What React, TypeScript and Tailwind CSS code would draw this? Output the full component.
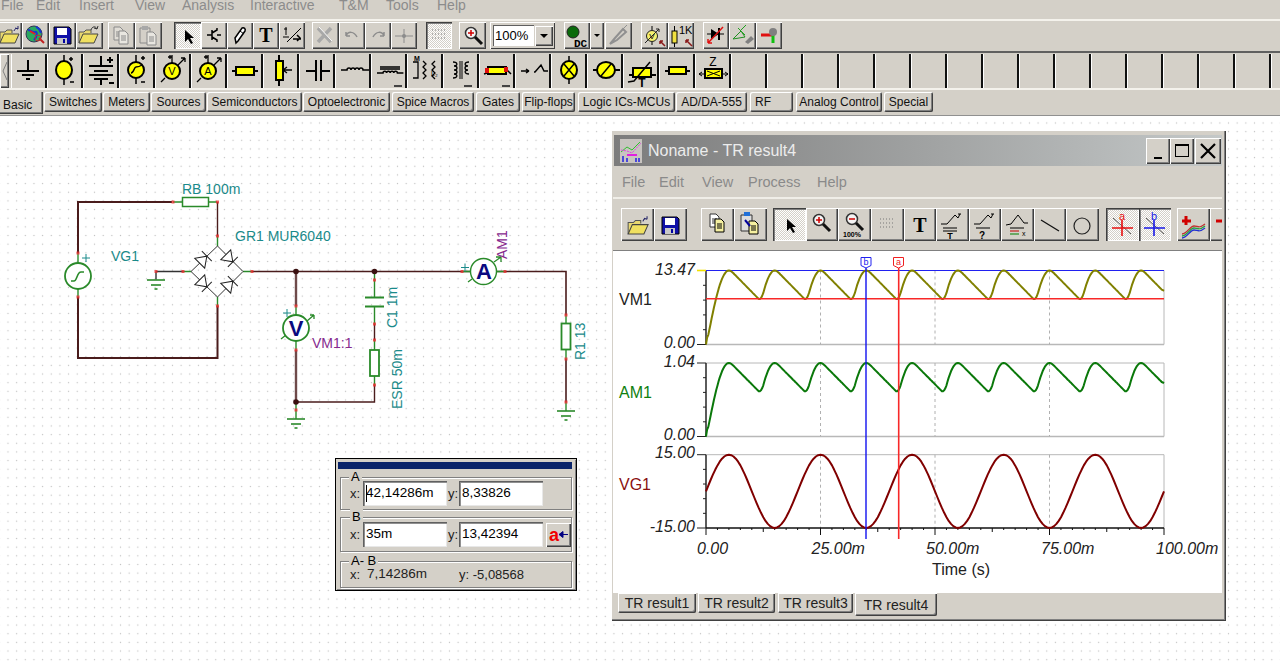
import React from "react";

const raised = "shadow-[inset_1px_1px_0_#ffffff,inset_-1px_-1px_0_#404040,inset_-2px_-2px_0_#808080]";
const pressed = "shadow-[inset_1px_1px_0_#404040,inset_2px_2px_0_#808080,inset_-1px_-1px_0_#ffffff]";
const checker = "bg-[repeating-conic-gradient(#ffffff_0_25%,#d4d0c8_0_50%)] bg-[length:2px_2px]";

const Ic = ({ w = 26, h = 27, children }: { w?: number; h?: number; children: React.ReactNode }) => (
  <svg width={w} height={h} viewBox={`0 0 ${w} ${h}`} fill="none" className="block">{children}</svg>
);

const Folder = ({ up }: { up?: boolean }) => (
  <>
    <path d="M3 21V10h5l2-2h5v3" stroke="#555" fill="#e8d870" />
    <path d="M3 21l4-9h15l-4 9z" fill="#f0e060" stroke="#444" />
    {up ? <path d="M15 8c1-4 5-4 6-1M21 7l1-3M21 7l-3-1" stroke="#333" /> : <path d="M17 9c1-3 3-3 4-2M21 7l-3-1M21 7l0-3" stroke="#226" />}
  </>
);
const Floppy = () => (
  <>
    <path d="M5 5h15l2 2v15H5z" fill="#1010a8" stroke="#000" />
    <rect x="8" y="6" width="10" height="7" fill="#fff" />
    <rect x="8" y="16" width="10" height="6" fill="#c8c8c8" />
    <rect x="14" y="17" width="2" height="4" fill="#0000a0" />
  </>
);
const Doc = ({ x, y, c = "#fff", s = "#333" }: { x: number; y: number; c?: string; s?: string }) => (
  <path d={`M${x} ${y}h6l3 3v10h-9z M${x + 2} ${y + 5}h5 M${x + 2} ${y + 7}h5 M${x + 2} ${y + 9}h5`} fill={c} stroke={s} />
);
const Arrow = ({ x = 9, y = 7 }: { x?: number; y?: number }) => (
  <path d={`M${x} ${y}v12l3-3 3 5 2-1-3-5h4z`} fill="#000" />
);
const Mag = ({ x = 6, y = 5, sign = "#d00000", plus = true }: { x?: number; y?: number; sign?: string; plus?: boolean }) => (
  <>
    <circle cx={x + 6} cy={y + 6} r={5.5} fill="#f4f4f4" stroke="#333" strokeWidth={1.5} />
    <path d={plus ? `M${x + 3} ${y + 6}h6M${x + 6} ${y + 3}v6` : `M${x + 3} ${y + 6}h6`} stroke={sign} strokeWidth={1.5} />
    <path d={`M${x + 10} ${y + 10}l7 7`} stroke="#111" strokeWidth={3} />
  </>
);
const Dots = ({ x = 6, y = 8 }: { x?: number; y?: number }) => (
  <path d={`M${x} ${y}h14M${x} ${y + 4}h14M${x} ${y + 8}h14`} stroke="#777" strokeDasharray="1 2" />
);

const t1: { c: string; press?: boolean; i: React.ReactNode }[] = [
  { c: "w-[24px] ml-[-2px]", i: <Ic><g transform="translate(-1,0)"><Folder /></g></Ic> },
  { c: "w-[27px]", i: <Ic><circle cx="12" cy="12" r="8" fill="#2aa860" stroke="#335" /><path d="M6 8c3 0 4 3 7 2s2 5-1 8M14 5c3 1 4 3 5 6" stroke="#1838d0" strokeWidth="2" /><path d="M8 9l5 3" stroke="#e02020" strokeWidth="2" /><path d="M17 16l5 5" stroke="#c02020" strokeWidth="2" /><circle cx="16" cy="16" r="3" stroke="#c03030" /></Ic> },
  { c: "w-[27px]", i: <Ic><Floppy /></Ic> },
  { c: "w-[27px]", i: <Ic><Folder up /></Ic> },
  { c: "w-[27px] ml-[5px]", i: <Ic><Doc x={6} y={5} c="#e0ddd6" s="#8a8a8a" /><Doc x={11} y={9} c="#e8e6e0" s="#8a8a8a" /></Ic> },
  { c: "w-[27px]", i: <Ic><path d="M5 6h10v15H5z" stroke="#8a8a8a" /><rect x="7" y="4" width="6" height="4" fill="#a8a8a8" /><Doc x={12} y={10} c="#e8e6e0" s="#8a8a8a" /></Ic> },
  { c: "w-[27px] ml-[12px]", press: true, i: <Ic><Arrow x={11} y={8} /></Ic> },
  { c: "w-[26px]", i: <Ic><path d="M6 13h5M11 8v10M11 11l5-3v-2M11 15l5 3v2M16 13h4" stroke="#000" strokeWidth="1.5" /></Ic> },
  { c: "w-[26px]", i: <Ic><path d="M9 21l-1-5 7-10c2-1 4 1 3 3l-7 10z" fill="#fff" stroke="#000" strokeWidth="1.5" /><path d="M13 9l4 3" stroke="#000" /></Ic> },
  { c: "w-[26px]", i: <Ic><text x="13" y="20" textAnchor="middle" fontFamily="'Liberation Serif',serif" fontWeight="700" fontSize="20" fill="#000">T</text></Ic> },
  { c: "w-[26px]", i: <Ic><path d="M5 7h3M7 5v8M8 20l14-14" stroke="#000" /><path d="M14 17h8M18 13l3 3-3 3" stroke="#000" strokeWidth="1.5" /><path d="M4 15h6" stroke="#000" /></Ic> },
  { c: "w-[27px] ml-[7px]", i: <Ic><path d="M6 6l13 14M19 6L6 20" stroke="#a8a8a8" strokeWidth="3.5" /><path d="M7 5l13 14" stroke="#fff" /></Ic> },
  { c: "w-[26px]", i: <Ic><path d="M7 14c2-5 8-5 11 1M7 14v-4M7 14h4" stroke="#8c8c8c" strokeWidth="1.5" /></Ic> },
  { c: "w-[26px]", i: <Ic><path d="M19 14c-2-5-8-5-11 1M19 14v-4M19 14h-4" stroke="#8c8c8c" strokeWidth="1.5" /></Ic> },
  { c: "w-[26px]", i: <Ic><path d="M4 14h18M13 7v14" stroke="#8c8c8c" /><circle cx="13" cy="14" r="2" fill="#8c8c8c" /></Ic> },
  { c: "w-[26px] ml-[9px]", press: true, i: <Ic><Dots /></Ic> },
  { c: "w-[27px] ml-[7px]", i: <Ic><Mag /></Ic> },
];
const t1b: { c: string; i: React.ReactNode }[] = [
  { c: "w-[26px]", i: <Ic><circle cx="9" cy="10" r="6" fill="#0a6a0a" stroke="#222" /><text x="10" y="25" fontSize="11" fontWeight="700" fontFamily="'Liberation Mono',monospace" fill="#000">DC</text></Ic> },
  { c: "w-[14px]", i: <Ic w={14}><path d="M4 12h6l-3 3z" fill="#000" /></Ic> },
  { c: "w-[27px] ml-[1px]", i: <Ic><path d="M5 22l5-6 8-9 3 3-9 8z" stroke="#909090" strokeWidth="2" /><path d="M18 7l4-4" stroke="#909090" /></Ic> },
  { c: "w-[27px] ml-[9px]", i: <Ic><circle cx="11" cy="14" r="5.5" fill="#f5f070" stroke="#222" /><text x="11" y="17" textAnchor="middle" fontSize="8" fill="#000">V</text><path d="M4 21L18 7M18 7h-3M18 7v3" stroke="#222" /><path d="M11 4v4M11 20v3" stroke="#000" /><path d="M24 24l-5-5M19 19h3M19 19v3" stroke="#8a1a1a" strokeWidth="1.5" /></Ic> },
  { c: "w-[26px]", i: <Ic><rect x="4" y="9" width="5" height="12" fill="#f0e040" stroke="#000" /><path d="M6.5 4v5M6.5 21v4" stroke="#000" /><text x="11" y="12" fontSize="11" fill="#000">1K</text><path d="M24 24l-6-6M18 18h3M18 18v3" stroke="#8a1a1a" strokeWidth="1.5" /></Ic> },
  { c: "w-[26px] ml-[9px]", i: <Ic><path d="M4 12h17" stroke="#000" /><path d="M8 7l8 5-8 5z" fill="#000" /><path d="M16 6v12" stroke="#000" strokeWidth="2" /><path d="M20 5L5 21M5 21h4M5 21v-4" stroke="#e01010" strokeWidth="1.5" /></Ic> },
  { c: "w-[27px]", i: <Ic><path d="M4 17l8-8 4 6z" stroke="#209020" /><path d="M9 6l7 7M12 8l5-5" stroke="#20a020" /><path d="M16 20l6-6 3 3-6 5z" fill="#808080" /></Ic> },
  { c: "w-[26px]", i: <Ic><path d="M5 13h11" stroke="#e01010" strokeWidth="3" /><path d="M17 13v8" stroke="#10c010" strokeWidth="3" /><circle cx="17" cy="10" r="4" fill="#808080" /></Ic> },
];

const S = 33;
const L = (p: { d: string; w?: number; c?: string }) => <path d={p.d} stroke={p.c || "#000"} strokeWidth={p.w || 1.5} />;
const Y = "#ffff00";
const bump = (x: number, y: number, n: number, r = 1.6) => {
  let d = `M${x} ${y}`;
  for (let i = 0; i < n; i++) d += `a${r} ${r} 0 0 1 ${2 * r} 0`;
  return d;
};
const t2: React.ReactNode[] = [
  <><L d="M16 6v11M5 17h22" w={2} /><L d="M10 21h12M14 25h4" w={2} /></>,
  <><ellipse cx="16" cy="16" rx="8" ry="9" fill={Y} stroke="#000" strokeWidth="2" /><L d="M16 1v6M16 25v6M23 3v4M21 5h4M22 28h4" /></>,
  <><L d="M17 2v10M5 12h24M10 17h14M5 21h24M10 25h14M17 25v6M26 3v6M23 6h6M25 29h5" w={2} /></>,
  <><circle cx="16" cy="16" r="8" fill={Y} stroke="#000" strokeWidth="2" /><L d="M11 19c3 0 3-6 5-6s3 0 6-2M16 1v7M16 24v6M21 4h4M23 2v4M21 28h4" /></>,
  <><circle cx="16" cy="17" r="8" fill={Y} stroke="#000" strokeWidth="2" /><text x="16" y="21" textAnchor="middle" fontSize="11" fill="#000">V</text><L d="M5 28l4-4M22 11l7-7M29 4h-4M29 4v4M12 3h4M14 1v4M16 1v8" w={1.3} /></>,
  <><circle cx="16" cy="17" r="8" fill={Y} stroke="#000" strokeWidth="2" /><text x="16" y="21" textAnchor="middle" fontSize="11" fill="#000">A</text><L d="M5 28l4-4M22 11l7-7M29 4h-4M29 4v4M12 3h4M14 1v4M16 1v8" w={1.3} /></>,
  <><L d="M4 17h26" w={2} /><rect x="8" y="13" width="18" height="8" fill={Y} stroke="#000" strokeWidth="2" /></>,
  <><L d="M15 1v31" w={2} /><rect x="12" y="7" width="7" height="19" fill={Y} stroke="#000" strokeWidth="2" /><L d="M19 16h9M19 16l4-3M19 16l4 3" w={1.3} /></>,
  <><L d="M6 17h10M21 17h9M16 6v21M21 6v21" w={2} /></>,
  <><path d={`M5 16h6${bump(11, 16, 4, 2).slice(6)}h6`} stroke="#000" strokeWidth="1.5" /></>,
  <><path d={`M5 19h6${bump(11, 19, 4, 1.8).slice(6)}h6`} stroke="#000" strokeWidth="1.5" /><L d="M8 13h20M8 15h20" w={1.5} /><L d="M22 32h8" w={2} c="#444" /></>,
  <><path d="M5 8h5v16H5M15 7l3 3-3 3 3 3-3 3 3 3-3 3M27 7l-3 3 3 3-3 3 3 3-3 3 3 3" stroke="#000" strokeWidth="1.3" /><text x="6" y="7" fontSize="7" fontWeight="700" fill="#000">M</text><text x="23" y="22" fontSize="7" fill="#000">L₂</text></>,
  <><path d="M9 8c5 0 5 4 1 4 4 0 4 4 0 4 4 0 4 4 0 4 4 0 4 4-1 4M25 8c-5 0-5 4-1 4-4 0-4 4 0 4-4 0-4 4 1 4" stroke="#000" strokeWidth="1.3" /><L d="M16 7v18M18 7v18" w={1} /><L d="M20 32h8" w={2} c="#444" /></>,
  <><path d="M4 20l6-2M25 14l6 6" stroke="#000" strokeWidth="1.5" /><rect x="8" y="13" width="18" height="7" fill={Y} stroke="#000" strokeWidth="2" /><rect x="5" y="14" width="4" height="5" fill="#e01010" /><rect x="24" y="13" width="4" height="5" fill="#e01010" /><L d="M22 32h8" w={2} c="#444" /></>,
  <><L d="M5 17h8M13 17l-3-2M13 17l-3 2M18 18h1l6-7 3 6h4" /></>,
  <><ellipse cx="17" cy="16" rx="8" ry="9" fill={Y} stroke="#000" strokeWidth="2" /><L d="M12 10l10 12M22 10L12 22M17 2v5M17 25v5" /></>,
  <><L d="M5 16h6M25 16h7" w={2} /><ellipse cx="18" cy="16" rx="9" ry="8" fill={Y} stroke="#000" strokeWidth="2" /><L d="M13 22l10-12" /></>,
  <><L d="M5 21h6M25 21h7" w={2} /><rect x="9" y="14" width="18" height="9" fill={Y} stroke="#000" strokeWidth="2" /><L d="M4 28l6-1 16-19" w={1.5} /><text x="18" y="33" fontSize="12" fontWeight="700" textAnchor="middle" fill="#000" fontFamily="'Liberation Sans',sans-serif">T</text></>,
  <><L d="M5 17h25" w={2} /><rect x="9" y="13" width="17" height="7" fill={Y} stroke="#000" strokeWidth="2" /></>,
  <><text x="17" y="12" fontSize="12" textAnchor="middle" fill="#000">Z</text><L d="M3 20h29M3 20l3-2M3 20l3 2M32 20l-3-2M32 20l-3 2" w={1} /><rect x="9" y="15" width="17" height="9" fill={Y} stroke="#000" strokeWidth="2" /><L d="M11 17l13 5M24 17l-13 5" w={1} /></>,
];

const tabs = [
  { t: "Switches", c: "w-[58px] ml-[1px]" }, { t: "Meters", c: "w-[47px] ml-[1px]" }, { t: "Sources", c: "w-[55px] ml-[1px]" },
  { t: "Semiconductors", c: "w-[95px] ml-[1px]" }, { t: "Optoelectronic", c: "w-[87px] ml-[1px]" }, { t: "Spice Macros", c: "w-[82px] ml-[2px]" },
  { t: "Gates", c: "w-[44px] ml-[2px]" }, { t: "Flip-flops", c: "w-[53px] ml-[2px]" }, { t: "Logic ICs-MCUs", c: "w-[97px] ml-[3px]" },
  { t: "AD/DA-555", c: "w-[71px] ml-[1px]" }, { t: "RF", c: "w-[43px] ml-[3px] justify-start pl-[5px]" }, { t: "Analog Control", c: "w-[86px] ml-[3px]" },
  { t: "Special", c: "w-[49px] ml-[2px]" },
];

/* schematic helpers, coordinates = page pixels */
const W = "#4a1c1c";
const G = "#2a8a2a";
const TEAL = "#1a8a8a";
const Port = ({ x, y }: { x: number; y: number }) => <rect x={x - 1.5} y={y - 1.5} width={3} height={3} fill="#e83030" opacity={0.8} />;
const Diode = ({ x, y, r }: { x: number; y: number; r: number }) => (
  <g transform={`translate(${x} ${y}) rotate(${r})`}>
    <path d="M-6 -7L-6 7L4 0Z" fill="#fff" stroke="#222" />
    <path d="M4 -7V7" stroke="#222" />
  </g>
);
const Gnd = ({ x, y }: { x: number; y: number }) => (
  <g stroke={G} strokeWidth="1.6">
    <path d={`M${x - 9} ${y}h18`} /><path d={`M${x - 5} ${y + 5}h10`} /><path d={`M${x - 1.5} ${y + 9}h3`} />
  </g>
);

function Schematic() {
  return (
    <svg width={1280} height={547} viewBox="0 116 1280 547" fill="none" className="absolute left-0 top-0">
      <g stroke={W} strokeWidth="2">
        <path d="M78 253V202H172" />
        <path d="M217.5 202V236" strokeWidth="1.4" />
        <path d="M217.5 306V358H78V297" />
        <path d="M252 271.5H566V315" strokeWidth="1.6" />
        <path d="M296 271V306M296 350V402" stroke="#6e4a4a" strokeWidth="2.4" />
        <path d="M296 402H374.5V385" strokeWidth="1.4" />
        <path d="M374.5 324V340" strokeWidth="1.4" />
        <path d="M566 359V402" strokeWidth="1.6" />
      </g>
      <g stroke={G} strokeWidth="1.4">
        <path d="M78 253v10M78 289v8M173 202h9M209 202h8M217.5 236v10M217.5 297v9M183 271.5h8M243 271.5h9" />
        <path d="M156 271.5h27M156 271.5v8" stroke="#333" />
        <path d="M296 306v9M296 341v9M296 402v8M296 410v9" />
        <path d="M374.5 271v26M374.5 307v17M374.5 340v10M374.5 376v9" />
        <path d="M365 297.5h19M365 306.5h19" strokeWidth="1.8" />
        <path d="M462 271.5h8M497 271.5h8" />
        <path d="M566 315v9M566 350v9M566 402v9" />
      </g>
      <path d="M191 271.5L217.5 246L243 271.5L217.5 297Z" stroke="#333" />
      <Diode x={204} y={259} r={-45} />
      <Diode x={230} y={259} r={45} />
      <Diode x={204} y={284} r={45} />
      <Diode x={230} y={284} r={-45} />
      <Gnd x={156} y={280} /><Gnd x={296} y={419} /><Gnd x={566} y={411} />

      <circle cx="78" cy="276" r="13" fill="#fff" stroke={G} strokeWidth="1.8" />
      <path d="M71 281h3c3 0 3-9 7-9h3" stroke={G} strokeWidth="1.6" />
      <path d="M82 258h8M86 254v8" stroke={TEAL} />
      <rect x="182.5" y="197.5" width="26" height="9" fill="#fff" stroke={G} strokeWidth="1.5" />
      <rect x="370" y="350" width="9" height="26" fill="#fff" stroke={G} strokeWidth="1.8" />
      <rect x="561.5" y="323.5" width="9" height="26" fill="#fff" stroke={G} strokeWidth="1.8" />

      <path d="M281 339l5-4M307 321l7-6M314 315h-4M314 315v4" stroke={G} strokeWidth="1.3" />
      <circle cx="296" cy="328" r="13" fill="#fff" stroke={G} strokeWidth="1.8" />
      <text x="296" y="336" textAnchor="middle" fontSize="22" fontWeight="700" fill="#0a0a80">V</text>
      <path d="M468 282l4-3M494 262l7-5M501 257h-5M501 257v5" stroke={G} strokeWidth="1.3" />
      <circle cx="483.5" cy="271.5" r="13" fill="#fff" stroke={G} strokeWidth="1.4" />
      <text x="484" y="279" textAnchor="middle" fontSize="22" fontWeight="700" fill="#0a0a80">A</text>
      <path d="M461 267.5h8M465 263.5v8" stroke={TEAL} />
      <path d="M294 314h8M298 310v8" stroke={TEAL} transform="translate(-11 -1)" />

      <circle cx="296" cy="271.5" r="2.8" fill="#3a1010" />
      <circle cx="374.5" cy="271.5" r="2.8" fill="#3a1010" />
      <circle cx="296" cy="402" r="2.8" fill="#3a1010" />

      {[[78, 253], [78, 297], [173, 202], [217.5, 202], [217.5, 236], [217.5, 306], [183, 271.5], [156, 271.5], [252, 271.5], [296, 306], [296, 350], [296, 410], [374.5, 280], [374.5, 324], [374.5, 340], [374.5, 385], [462, 271.5], [505, 271.5], [566, 315], [566, 359], [566, 402]].map(([x, y], i) => (
        <Port key={i} x={x} y={y} />
      ))}

      <g fontSize="14" fill={TEAL}>
        <text x="182" y="194">RB 100m</text>
        <text x="235" y="241">GR1 MUR6040</text>
        <text x="111" y="261">VG1</text>
        <text transform="translate(397 328) rotate(-90)">C1 1m</text>
        <text transform="translate(402 409) rotate(-90)">ESR 50m</text>
        <text transform="translate(585 360) rotate(-90)">R1 13</text>
      </g>
      <g fontSize="14" fill="#862a8e">
        <text x="312" y="348">VM1:1</text>
        <text transform="translate(507 259) rotate(-90)">AM1</text>
      </g>
    </svg>
  );
}

/* Cursor readout */
const Group = ({ label, c, lc, children }: { label: string; c: string; lc: string; children: React.ReactNode }) => (
  <div className={`relative border border-[#808080] shadow-[1px_1px_0_#fff,inset_1px_1px_0_#fff] ${c}`}>
    <span className={`absolute top-[-9px] bg-[#d4d0c8] px-[2px] text-[13px] leading-[15px] text-black ${lc}`}>{label}</span>
    {children}
  </div>
);
const Field = ({ c, v, caret }: { c: string; v: string; caret?: boolean }) => (
  <div className={`h-[25px] bg-white flex items-center pl-[3px] text-[13.5px] text-black shadow-[inset_1px_1px_0_#606060,inset_2px_2px_0_#909090,inset_-1px_-1px_0_#e8e8e8] ${c}`}>
    {caret && <span className="w-[1px] h-[17px] bg-black" />}
    <span className={caret ? "-ml-[1px]" : ""}>{v}</span>
  </div>
);

function Readout() {
  return (
    <div className="absolute left-[335px] top-[342px] w-[242px] h-[133px] bg-[#d4d0c8] border border-black shadow-[inset_1px_1px_0_#d4d0c8,inset_-1px_-1px_0_#808080] px-[4px] pt-[3px] flex flex-col">
      <div className="h-[7px] mx-[-2px] mr-[0px] bg-[#0a246a]" />
      <Group label="A" c="h-[33px] mt-[8px] flex items-center pl-[9px]" lc="left-[8px]">
        <span className="w-[13px] text-[13px] text-[#222]">x:</span>
        <Field c="w-[84px]" v="42,14286m" caret />
        <span className="w-[11px] ml-[1px] text-[13px] text-[#222]">y:</span>
        <Field c="w-[84px]" v="8,33826" />
      </Group>
      <Group label="B" c="h-[35px] mt-[7px] flex items-center pl-[9px]" lc="left-[9px]">
        <span className="w-[13px] text-[13px] text-[#222]">x:</span>
        <Field c="w-[84px]" v="35m" />
        <span className="w-[11px] ml-[1px] text-[13px] text-[#222]">y:</span>
        <Field c="w-[84px]" v="13,42394" />
        <div className={`w-[25px] h-[24px] ml-[3px] flex items-center justify-center ${raised}`}>
          <span className="text-[18px] font-bold leading-none text-[#f00000]">a</span>
          <svg width="9" height="7" viewBox="0 0 9 7" className="block"><path d="M9 3.5H3M0 3.5L4 .5v6z" fill="#000080" stroke="#000080" /></svg>
        </div>
      </Group>
      <Group label="A- B" c="h-[27px] mt-[9px] flex items-center pl-[9px] text-[13.5px] text-[#222]" lc="left-[8px]">
        <span className="w-[17px] text-[13px]">x:</span>
        <span className="w-[92px]">7,14286m</span>
        <span className="text-[13px]">y: -5,08568</span>
      </Group>
    </div>
  );
}

/* Result window */
const rb: { c: string; press?: boolean; i: React.ReactNode }[] = [
  { c: "w-[33px]", i: <Ic w={33} h={33}><g transform="translate(4,4) scale(1.05)"><Folder /></g></Ic> },
  { c: "w-[33px]", i: <Ic w={33} h={33}><g transform="translate(3,4)"><Floppy /></g></Ic> },
  { c: "w-[33px] ml-[14px]", i: <Ic w={33} h={33}><Doc x={9} y={6} /><Doc x={14} y={11} c="#f5f0a0" s="#000" /></Ic> },
  { c: "w-[33px]", i: <Ic w={33} h={33}><path d="M7 7h11v16H7z" stroke="#333" fill="#ddd" /><rect x="10" y="4" width="6" height="4" fill="#2070d8" /><Doc x={15} y={13} c="#f5f0a0" s="#000" /><path d="M11 12l5 6" stroke="#00009a" strokeWidth="2" /></Ic> },
  { c: "w-[33px] ml-[6px]", press: true, i: <Ic w={33} h={33}><Arrow x={14} y={11} /></Ic> },
  { c: "w-[32px]", i: <Ic w={32} h={33}><Mag x={7} y={6} /></Ic> },
  { c: "w-[33px]", i: <Ic w={33} h={33}><Mag x={8} y={5} plus={false} /><text x="5" y="29" fontSize="7" fontWeight="700" fill="#000">100%</text></Ic> },
  { c: "w-[33px]", i: <Ic w={33} h={33}><Dots x={9} y={11} /></Ic> },
  { c: "w-[32px]", i: <Ic w={32} h={33}><text x="16" y="24" textAnchor="middle" fontFamily="'Liberation Serif',serif" fontWeight="700" fontSize="20" fill="#000">T</text></Ic> },
  { c: "w-[33px]", i: <Ic w={33} h={33}><path d="M5 16h6l8-9 3 3M22 10l2-4M22 6h3" stroke="#000" /><path d="M7 20h14M7 23h14" stroke="#000" /><text x="14" y="31" fontSize="9" textAnchor="middle" fontWeight="700" fill="#000">T</text></Ic> },
  { c: "w-[32px]", i: <Ic w={32} h={33}><path d="M5 16h6l8-9 3 3M22 10l2-4M22 6h3" stroke="#000" /><path d="M7 20h14" stroke="#000" /><text x="13" y="31" fontSize="10" textAnchor="middle" fontWeight="700" fill="#000">?</text></Ic> },
  { c: "w-[33px]", i: <Ic w={33} h={33}><path d="M5 17l5-1 7-9 6 8h4" stroke="#000" /><path d="M9 20h14" stroke="#000" /><path d="M9 23h9" stroke="#c00000" /><path d="M9 26h9" stroke="#008000" /><text x="21" y="28" fontSize="7" fill="#000">x</text></Ic> },
  { c: "w-[32px]", i: <Ic w={32} h={33}><path d="M7 12l18 11" stroke="#111" strokeWidth="1.3" /></Ic> },
  { c: "w-[33px]", i: <Ic w={33} h={33}><circle cx="16" cy="18" r="8" stroke="#222" strokeWidth="1.2" /></Ic> },
  { c: "w-[33px] ml-[7px]", press: true, i: <Ic w={33} h={33}><path d="M7 10l18 16" stroke="#555" /><path d="M6 20h21M16 12v16" stroke="#e81010" strokeWidth="1.6" /><text x="16" y="12" fontSize="11" fill="#e81010" textAnchor="middle">a</text></Ic> },
  { c: "w-[32px]", press: true, i: <Ic w={32} h={33}><path d="M7 10l18 16" stroke="#555" /><path d="M5 20h21M15 12v16" stroke="#1818e8" strokeWidth="1.6" /><text x="15" y="12" fontSize="11" fill="#1818e8" textAnchor="middle">b</text></Ic> },
  { c: "w-[33px] ml-[6px]", i: <Ic w={33} h={33}><path d="M5 13h9M9 8v9" stroke="#d00000" strokeWidth="3" /><path d="M5 26c5 0 8-8 12-8s5 3 11-2" stroke="#c03030" strokeWidth="1.3" /><path d="M5 28c5 0 8-8 12-8s5 3 11-2" stroke="#20a040" strokeWidth="1.3" /><path d="M5 30c5 0 8-8 12-8s5 3 11-2" stroke="#2030d0" strokeWidth="1.3" /></Ic> },
  { c: "w-[16px]", i: <Ic w={16} h={33}><path d="M6 13h8" stroke="#d00000" strokeWidth="3" /></Ic> },
];

const X0 = 706, PX = 4.58;
function rectified() {
  const raw: number[] = [];
  let v = 0;
  const dt = 0.25;
  for (let t = 0; t <= 100; t += dt) {
    const s = Math.max(0, Math.abs(Math.sin((2 * Math.PI * t) / 20)) * 1.04 - 0.04);
    v = Math.max(s, v - 0.0625 * dt);
    raw.push(v);
  }
  // slight smoothing rounds the peaks and the kinks
  const out: [number, number][] = raw.map((_, i) => {
    let sum = 0, n = 0;
    for (let k = -2; k <= 2; k++) {
      const a = raw[i + k];
      if (a !== undefined) { sum += a; n++; }
    }
    return [i * dt, i === 0 ? 0 : sum / n];
  });
  const peak = Math.max(...out.map((p) => p[1]));
  return out.map(([t, y]) => [t, y / peak] as [number, number]);
}
const rect = rectified();
const pathOf = (top: number, bot: number) =>
  "M" + rect.map(([t, v]) => `${(X0 + t * PX).toFixed(1)} ${(bot - v * (bot - top)).toFixed(1)}`).join("L");
const sinePath = () => {
  let d = "";
  for (let t = 0; t <= 100; t += 0.5) {
    const y = 491.3 - 36.6 * Math.sin((2 * Math.PI * t) / 20);
    d += `${t ? "L" : "M"}${(X0 + t * PX).toFixed(1)} ${y.toFixed(1)}`;
  }
  return d;
};
const XT = 1164;

const Plot = ({ top, bot, bottomBlack }: { top: number; bot: number; bottomBlack?: boolean }) => (
  <g>
    <path d={`M${X0} ${top}H${XT}V${bot}`} stroke="#b8b8b8" />
    {!bottomBlack && <path d={`M${X0} ${bot}H${XT}`} stroke="#b8b8b8" strokeWidth="1.4" />}
    <path d={`M820.5 ${top}V${bot}M935 ${top}V${bot}M1049.5 ${top}V${bot}`} stroke="#b0b0b0" strokeDasharray="3 3" />
    <path d={`M${X0} ${top}V${bot}`} stroke="#333" strokeWidth="1.6" />
    <path d={`M697 ${top}H${X0}M697 ${bot}H${X0}`} stroke="#222" />
    {[1, 2, 3, 4].map((k) => (
      <path key={k} d={`M703 ${top + ((bot - top) * k) / 5}H${X0}`} stroke="#222" />
    ))}
  </g>
);

function Chart() {
  const ticks: React.ReactNode[] = [];
  for (let i = 0; i <= 40; i++) {
    const x = X0 + i * 2.5 * PX;
    const h = i % 10 === 0 ? 7 : i % 5 === 0 ? 4 : 2;
    ticks.push(<path key={i} d={`M${x} 528V${528 + h}`} stroke="#111" />);
  }
  const yLabel = "fill-[#222] italic text-[16px]";
  const xl: [number, string][] = [[697, "0.00"], [811.5, "25.00m"], [926, "50.00m"], [1041, "75.00m"], [1156, "100.00m"]];
  return (
    <svg width={606} height={343} viewBox="613 250 606 343" fill="none" className="block">
      <Plot top={270.5} bot={344.5} />
      <Plot top={363} bot={436.5} />
      <Plot top={454.7} bot={528} bottomBlack />
      <path d={`M${X0} 528H${XT}`} stroke="#111" strokeWidth="1.4" />
      {ticks}
      <path d="M697 270.5H706" stroke="#f0e000" strokeWidth="1.6" />
      <path d={`M${X0} 270.5H${XT}`} stroke="#2020f0" strokeWidth="1.2" />
      <path d={pathOf(270.5, 344.5)} stroke="#808000" strokeWidth="2" strokeLinejoin="round" />
      <path d={`M${X0} 298.7H${XT}`} stroke="#f82828" strokeWidth="1.6" />
      <path d={pathOf(363, 436.5)} stroke="#0a780a" strokeWidth="2" strokeLinejoin="round" />
      <path d={sinePath()} stroke="#800000" strokeWidth="2" strokeLinejoin="round" />
      <path d="M866 268V539" stroke="#1010f0" strokeWidth="1.4" />
      <path d="M898.7 268V539" stroke="#f82828" strokeWidth="1.6" />
      <path d="M861 257.5h10v8l-5 2.5-5-2.5z" fill="#fff" stroke="#2020f0" />
      <path d="M893.5 257.5h10v8l-5 2.5-5-2.5z" fill="#fff" stroke="#f02020" />
      <text x="866" y="265" textAnchor="middle" fontSize="9" fill="#2020f0">b</text>
      <text x="898.5" y="265" textAnchor="middle" fontSize="9" fill="#f02020">a</text>

      <g textAnchor="end">
        <text x="695" y="275" className={yLabel}>13.47</text>
        <text x="695" y="348" className={yLabel}>0.00</text>
        <text x="695" y="367" className={yLabel}>1.04</text>
        <text x="695" y="440" className={yLabel}>0.00</text>
        <text x="695" y="458" className={yLabel}>15.00</text>
        <text x="695" y="532" className={yLabel}>-15.00</text>
      </g>
      <text x="619" y="305" fontSize="16" fill="#222">VM1</text>
      <text x="619" y="398" fontSize="16" fill="#0f800f">AM1</text>
      <text x="619" y="490" fontSize="16" fill="#8a1010">VG1</text>
      {xl.map(([x, t]) => (
        <text key={t} x={x} y="554" className={yLabel}>{t}</text>
      ))}
      <text x="932" y="575" fontSize="16" fill="#222">Time (s)</text>
    </svg>
  );
}

function ResultWindow() {
  return (
    <div className={`absolute left-[611px] top-[14px] w-[615px] h-[491px] bg-[#d4d0c8] flex flex-col pt-[5px] pl-[2px] pr-[4px] ${raised}`}>
      <div className="h-[31px] shrink-0 ml-[1px] flex items-center bg-linear-to-r from-[#7c7c7c] to-[#c4c8c8]">
        <svg width="22" height="24" viewBox="0 0 22 24" fill="none" className="block ml-[6px]">
          <rect width="22" height="24" fill="#c8c4c0" />
          <path d="M1 13l6-5 5 3 8-8" stroke="#30c030" />
          <path d="M1 11l6 1 5 2 9-10" stroke="#e040e0" strokeDasharray="2 1" />
          <path d="M7 16h10" stroke="#e020e0" strokeWidth="2" />
          <path d="M3 17v6M7 19v4M16 19v4M19 19v4" stroke="#2020e0" strokeWidth="1.5" />
        </svg>
        <span className="ml-[6px] text-[16px] text-[#ececec] leading-none">Noname - TR result4</span>
        <div className="ml-auto flex items-center pr-[1px]">
          <div className={`w-[24px] h-[26px] flex items-end justify-center pb-[5px] ${raised} bg-[#d4d0c8]`}><span className="block w-[8px] h-[2px] bg-black" /></div>
          <div className={`w-[24px] h-[26px] flex items-center justify-center ${raised} bg-[#d4d0c8]`}><span className="block w-[14px] h-[13px] border border-black border-t-2" /></div>
          <div className={`w-[26px] h-[26px] ml-[1px] flex items-center justify-center ${raised} bg-[#d4d0c8]`}>
            <svg width="16" height="16" viewBox="0 0 16 16" className="block"><path d="M1 1l14 14M15 1L1 15" stroke="#000" strokeWidth="2.2" /></svg>
          </div>
        </div>
      </div>
      <div className="h-[33px] shrink-0 flex items-center text-[14.5px] text-[#8a8a8a] border-b-2 border-b-[#f0eee8] pt-[2px] pl-[9px]">
        <span className="w-[37px]">File</span>
        <span className="w-[43px]">Edit</span>
        <span className="w-[46px]">View</span>
        <span className="w-[69px]">Process</span>
        <span>Help</span>
      </div>
      <div className="h-[51px] shrink-0 flex items-start pt-[9px] pl-[8px] overflow-hidden">
        {rb.map((b, i) => (
          <div key={i} className={`h-[33px] shrink-0 ${b.c} ${b.press ? `${checker} ${pressed}` : raised}`}>{b.i}</div>
        ))}
      </div>
      <div className="h-[343px] shrink-0 bg-white shadow-[inset_0_1px_0_#808080] overflow-hidden font-['Liberation_Sans',sans-serif]">
        <Chart />
      </div>
      <div className="flex items-start pl-[5px] text-[14px] text-[#222]">
        {[["TR result1", "w-[78px]"], ["TR result2", "w-[77px] ml-[2px]"], ["TR result3", "w-[75px] ml-[3px]"]].map(([t, c]) => (
          <div key={t} className={`h-[20px] flex items-center justify-center ${c} ${raised} rounded-b-[2px]`}>{t}</div>
        ))}
        <div className={`h-[23px] w-[82px] ml-[2px] flex items-center justify-center pt-[1px] ${raised} rounded-b-[2px]`}>TR result4</div>
      </div>
    </div>
  );
}

export default function App() {
  return (
    <div className="w-[1280px] h-[663px] overflow-hidden bg-[#d4d0c8] flex flex-col font-['Liberation_Sans',sans-serif]">
      {/* menu */}
      <div className="h-[21px] shrink-0 overflow-hidden border-b-2 border-b-[#f4f2ec]">
        <div className="flex -mt-[5px] text-[14px] text-[#8c8c8c]">
          <span className="ml-[1px] w-[35px]">File</span>
          <span className="w-[43px]">Edit</span>
          <span className="w-[56px]">Insert</span>
          <span className="w-[47px]">View</span>
          <span className="w-[68px]">Analysis</span>
          <span className="w-[89px]">Interactive</span>
          <span className="w-[47px]">T&amp;M</span>
          <span className="w-[51px]">Tools</span>
          <span>Help</span>
        </div>
      </div>
      {/* toolbar 1 */}
      <div className="h-[30px] shrink-0 flex items-start pt-[1px] overflow-hidden">
        {t1.map((b, i) => (
          <div key={i} className={`h-[27px] shrink-0 ${b.c} ${b.press ? `${checker} ${pressed}` : raised}`}>{b.i}</div>
        ))}
        <div className="w-[65px] h-[27px] ml-[4px] shrink-0 flex items-center pl-[3px] gap-[1px] shadow-[inset_1px_1px_0_#fff,inset_-1px_-1px_0_#404040]">
          <div className="w-[41px] h-[21px] bg-white shadow-[inset_1px_1px_0_#606060] flex items-center pl-[2px] text-[13px] text-black">100%</div>
          <div className={`w-[18px] h-[20px] flex items-center justify-center ${raised}`}><span className="block w-0 h-0 border-x-[4px] border-x-transparent border-t-[4px] border-t-black" /></div>
        </div>
        <div className="flex ml-[9px]">
          {t1b.map((b, i) => (
            <div key={i} className={`h-[27px] shrink-0 ${b.c} ${raised}`}>{b.i}</div>
          ))}
        </div>
      </div>
      {/* toolbar 2 */}
      <div className="h-[39px] shrink-0 flex items-end pb-0 border-t-[2px] border-t-[#606060] border-b-2 border-b-[#f4f2ec] overflow-hidden">
        <div className={`w-[9px] h-[34px] shrink-0 flex items-center justify-center ${raised}`}>
          <svg width="6" height="20" viewBox="0 0 6 20" className="block"><path d="M5 1L1 10l4 9" stroke="#808080" fill="none" /></svg>
        </div>
        <div className="w-[2px] shrink-0" />
        {Array.from({ length: 36 }).map((_, i) => (
          <div key={i} className="w-[36px] h-[34px] shrink-0 border-l border-l-white border-r-2 border-r-[#111]">
            {t2[i] && <Ic w={S} h={S}>{t2[i]}</Ic>}
          </div>
        ))}
      </div>
      {/* tabs */}
      <div className="h-[26px] shrink-0 flex items-start pt-[2px] text-[12px] text-[#111] border-b border-b-[#909090]">
        <div className="w-[43px] h-[22px] flex items-center pl-[3px] pt-[3px] shadow-[inset_-1px_-1px_0_#404040,inset_-2px_-2px_0_#808080]">Basic</div>
        {tabs.map((t) => (
          <div key={t.t} className={`h-[20px] flex items-center justify-center rounded-[2px] ${t.c} ${raised}`}>{t.t}</div>
        ))}
      </div>
      {/* schematic canvas */}
      <div className="relative flex-1 bg-white bg-[radial-gradient(circle,#c0c0c0_0.7px,transparent_1px)] bg-[length:8.67px_8.67px] bg-[position:3.67px_2.67px]">
        <Schematic />
        <Readout />
        <ResultWindow />
      </div>
    </div>
  );
}
